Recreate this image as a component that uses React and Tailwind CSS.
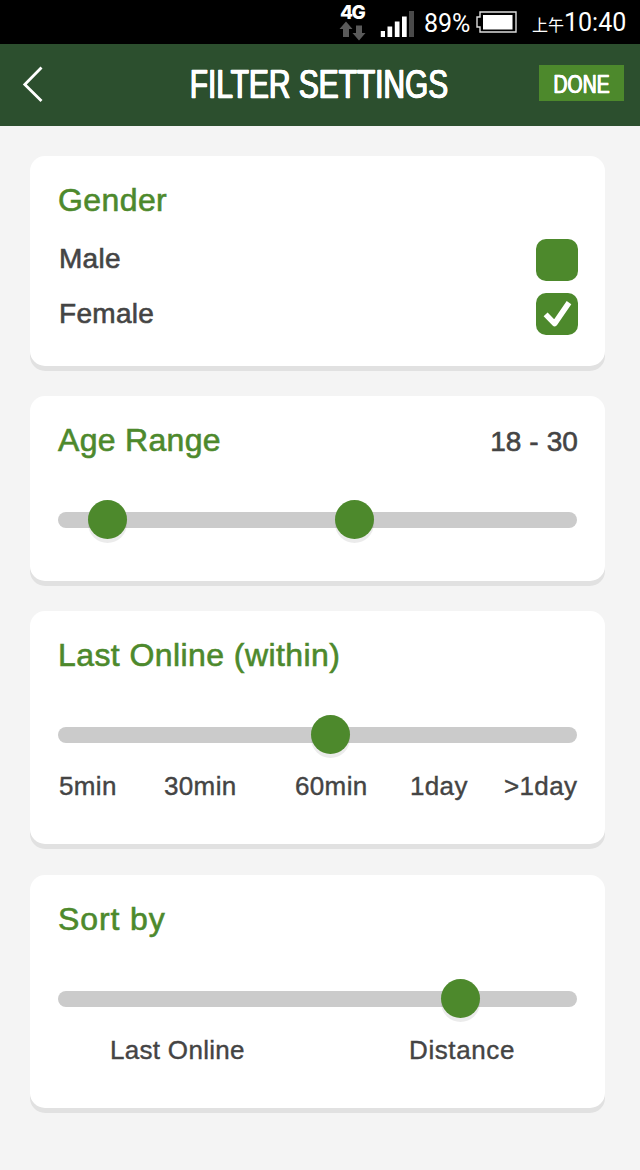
import React from "react";

function StatusBar() {
  return (
    <div className="flex h-11 w-full items-start bg-black pl-[339px] font-['Roboto','Noto_Sans_CJK_TC',sans-serif] text-white">
      <div className="flex w-[41px] flex-col pt-1">
        <span className="pl-px font-['Inter',sans-serif] text-[19px] leading-[17px] font-extrabold tracking-[-1.5px]">
          4G
        </span>
        <svg width="27" height="20" viewBox="0 0 27 20" fill="#5a5a5a">
          <path d="M7 .5 13.5 8H10V16H4V8H.5Z" />
          <path d="M17 4.5H23V12H26.5L20 19.5 13.5 12H17Z" />
        </svg>
      </div>
      <svg className="mt-[11px] shrink-0" width="34" height="26" viewBox="0 0 34 26" fill="#fff">
        <path d="M.8 20H5V26H.8ZM7.5 15.5H12.2V26H7.5ZM14.8 10.5H19.5V26H14.8ZM22 5.5H26.7V26H22Z" />
        <path d="M29 0H34V26H29Z" fill="#4a4a4a" />
      </svg>
      <span className="ml-[10px] w-[52px] pt-[9px] text-[25px] leading-[30px]">89%</span>
      <svg className="mt-[11px] shrink-0" width="41" height="22" viewBox="0 0 41 22">
        <path d="M4 1H40V21H4V16H1V6H4Z" fill="none" stroke="#ddd" strokeWidth="1.4" />
        <rect x="7" y="4" width="29.5" height="14.5" fill="#fff" />
      </svg>
      <div className="ml-[15px] flex items-baseline pt-2 whitespace-nowrap">
        <span className="text-[16px] leading-[30px]">上午</span>
        <span className="text-[25px] leading-[30px]">10:40</span>
      </div>
    </div>
  );
}

function Header() {
  return (
    <header className="flex h-[82px] items-center bg-[#2c4f2e] pr-4 pb-1 pl-[22px] text-white">
      <svg className="mt-px shrink-0" width="22" height="36" viewBox="0 0 22 36" fill="none" stroke="#fff" strokeWidth="2.8">
        <path d="M19.5 1.6 2.8 18.4 19.5 35" />
      </svg>
      <div className="flex flex-1 justify-center pl-[54px]">
        <h1 className="-mx-12 scale-x-[0.747] pt-0.5 text-[40px] leading-[48px] whitespace-nowrap [-webkit-text-stroke:0.6px_#fff] [text-shadow:0.8px_0_#fff,-0.8px_0_#fff]">
          FILTER SETTINGS
        </h1>
      </div>
      <button className="flex h-9 w-[85px] shrink-0 items-center justify-center bg-[#4d892c]">
        <span className="scale-x-[0.75] pt-0.5 text-[26px] leading-8 [-webkit-text-stroke:0.4px_#fff] [text-shadow:0.5px_0_#fff,-0.5px_0_#fff]">
          DONE
        </span>
      </button>
    </header>
  );
}

function Card({ title, value, className, titleClass, children }) {
  return (
    <section className={"rounded-[15px] bg-white px-7 pt-7 shadow-[0_5px_0_#e1e1e1] " + className}>
      <div className="flex h-8 items-center justify-between">
        <h2
          className={
            "text-[32px] leading-8 whitespace-nowrap text-[#4d892c] [-webkit-text-stroke:0.6px_#4d892c] " + titleClass
          }
        >
          {title}
        </h2>
        {value && (
          <span className="-mr-px pt-1 text-[28px] leading-8 tracking-[0.1px] [-webkit-text-stroke:0.6px_#444]">
            {value}
          </span>
        )}
      </div>
      {children}
    </section>
  );
}

function CheckRow({ label, checked, className }) {
  return (
    <div className="-mr-px flex h-[42px] items-center justify-between">
      <span className={"text-[28px] leading-8 tracking-[0.3px] [-webkit-text-stroke:0.6px_#444] " + className}>{label}</span>
      <span className="flex size-[42px] items-center justify-center rounded-[10px] bg-[#4d892c]">
        {checked && (
          <svg width="42" height="42" viewBox="0 0 42 42" fill="none" stroke="#fff" strokeWidth="5.6" strokeLinejoin="round">
            <path d="M9.6 21.4 18.6 30.6 33 9.6" />
          </svg>
        )}
      </span>
    </div>
  );
}

function Slider({ thumbs }) {
  return (
    <div className="relative mt-[44.5px] flex h-[39px] w-[519px] items-center">
      <div className="h-4 w-full rounded-full bg-[#cbcbcb]" />
      {thumbs.map((x) => (
        <span
          key={x}
          className="absolute top-0 size-[39px] rounded-full bg-[#4d892c] shadow-[0_4px_0_rgba(0,0,0,0.08)]"
          style={{ left: x }}
        />
      ))}
    </div>
  );
}

export default function App() {
  return (
    <div className="h-[1170px] w-[640px] overflow-hidden bg-[#f4f4f4] font-['Liberation_Sans',Arial,sans-serif] text-[#444]">
      <StatusBar />
      <Header />
      <main className="flex flex-col pt-[29.5px] pr-[35px] pl-[30px]">
        <Card title="Gender" titleClass="tracking-[0.4px]" className="h-[210px]">
          <div className="flex flex-col gap-3 pt-[23.5px]">
            <CheckRow label="Male" className="pb-[3px] pl-px" />
            <CheckRow label="Female" className="pb-px pl-px" checked />
          </div>
        </Card>
        <Card title="Age Range" value="18 - 30" titleClass="tracking-[0.3px]" className="mt-[30px] h-[185.5px]">
          <Slider thumbs={[30.4, 277.4]} />
        </Card>
        <Card title="Last Online (within)" titleClass="tracking-[0.42px]" className="mt-[29.5px] h-[233px]">
          <Slider thumbs={[253.4]} />
          <div className="mt-[15.5px] grid grid-cols-[105px_131px_115px_94px_1fr] pl-px text-[26px] leading-8 tracking-[0.35px] whitespace-nowrap [-webkit-text-stroke:0.4px_#444]">
            <span>5min</span>
            <span>30min</span>
            <span>60min</span>
            <span>1day</span>
            <span>&gt;1day</span>
          </div>
        </Card>
        <Card title="Sort by" titleClass="tracking-[0.9px]" className="mt-[31px] h-[233px]">
          <Slider thumbs={[383.4]} />
          <div className="mt-[15.5px] grid grid-cols-[299px_1fr] pl-[52px] text-[26px] leading-8 tracking-[0.3px] whitespace-nowrap [-webkit-text-stroke:0.4px_#444]">
            <span>Last Online</span>
            <span className="tracking-[0.6px]">Distance</span>
          </div>
        </Card>
      </main>
    </div>
  );
}
